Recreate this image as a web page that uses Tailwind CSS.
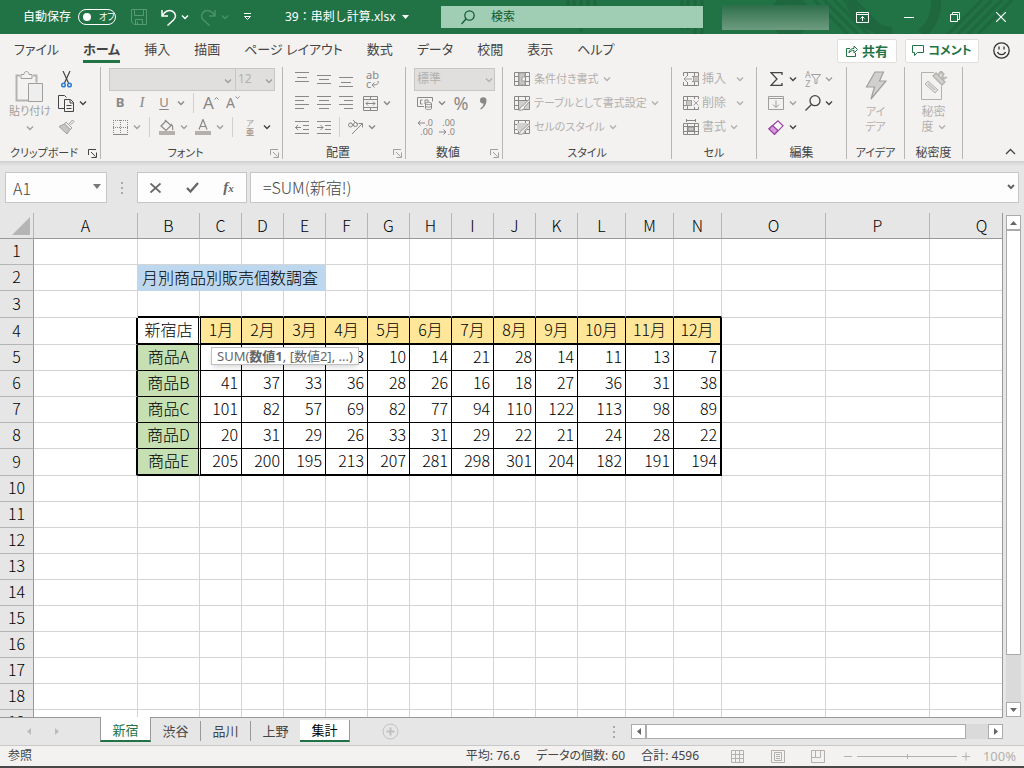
<!DOCTYPE html>
<html lang="ja">
<head>
    <meta charset="UTF-8">
    <meta name="viewport" content="width=device-width, initial-scale=1.0">
    <title>39：串刺し計算.xlsx - Excel</title>
    <script src="https://cdn.jsdelivr.net/npm/@tailwindcss/browser@4"></script>
</head>
<body class="h-screen flex flex-col overflow-hidden bg-[#e6e6e6] font-['Noto_Sans','Noto_Sans_CJK_JP',sans-serif] text-xs text-[#444444] [font-feature-settings:'palt']">

    <!-- Shared icons -->
    <svg class="hidden">
        <symbol id="chev" viewBox="0 0 8 6"><path d="M1 1.5l3 3 3-3" fill="none" stroke="currentColor" stroke-width="1.4"/></symbol>
        <symbol id="launch" viewBox="0 0 9 9"><path d="M.5 6V.5H8M3 3l4.500 4.500M8.500 3.500v5h-5" fill="none" stroke="currentColor"/></symbol>
        <symbol id="sheet" viewBox="0 0 16 16"><path d="M.5 1.500h15v13H.5zM.5 5.500h15M.5 10.500h15M4.500 1.500v13M11.500 1.500v13" fill="none" stroke="currentColor"/></symbol>
    </svg>

    <!-- Title bar -->
    <header class="relative h-[34px] shrink-0 flex items-center bg-[#217346] text-white">
        <svg class="absolute right-0 top-0" width="460" height="34" viewBox="0 0 460 34" fill="none" stroke="#1e673f">
            <path stroke-width="3" d="M4 0v6M10 0v6M17 0v32M24 0v6M31 0v6M118 0v30M124 0v30M131 0v34M138 0v34"/>
            <circle cx="226" cy="16" r="16" stroke-width="9"/>
            <path stroke-width="10" d="M286 0a48 40 0 0 0 42 32M372 0a48 44 0 0 1-14 34"/>
            <path stroke-width="3" d="M250 0l34 34M260 0l34 34M270 0l34 34M280 0l34 34M290 0l34 34M384 34l34-34M394 34l34-34M404 34l34-34M414 34l34-34"/>
        </svg>
        <div class="relative w-[441px] flex items-center">
            <span class="ml-[23px] w-[55px]">自動保存</span>
            <button role="switch" aria-checked="false" aria-label="自動保存" class="w-[38px] h-4 rounded-full border border-white flex items-center pl-1 gap-2 text-[9px]"><span class="w-2 h-2 rounded-full bg-white"></span>オフ</button>
            <button aria-label="上書き保存" class="ml-[15px] text-[#579a76]">
                <svg width="16" height="17" viewBox="0 0 16 17" fill="none" stroke="currentColor"><path d="M.5 .5h15v15H3l-2.500-2.500zM3.500 .5v6h9v-6M4.500 15.500v-5h7v5M6.500 15v-2"/></svg>
            </button>
            <button aria-label="元に戻す" class="ml-3.5">
                <svg width="16" height="17" viewBox="0 0 16 17" fill="none" stroke="currentColor" stroke-width="1.500"><path d="M1 1v6h6M1.500 6.500C4 2 8 .5 11 2c4 2 4.500 6 1.500 9l-6 5.500"/></svg>
            </button>
            <button aria-label="元に戻す一覧" class="ml-1"><svg width="8" height="6"><use href="#chev"/></svg></button>
            <button aria-label="やり直し" class="ml-3 text-[#4a9069]">
                <svg width="16" height="17" viewBox="0 0 16 17" fill="none" stroke="currentColor" stroke-width="1.500"><path d="M14 1v6H8M13.500 6.500C11 2 7 .5 4 2 0 4-.5 8 2.500 11l6 5.500"/></svg>
            </button>
            <button aria-label="やり直し一覧" class="ml-1 text-[#4a9069]"><svg width="8" height="6"><use href="#chev"/></svg></button>
            <button aria-label="クイック アクセス ツール バーのユーザー設定" class="ml-3.5">
                <svg width="9" height="8" viewBox="0 0 9 8" fill="none" stroke="currentColor"><path d="M1 .5h7"/><path d="M1.500 3.500h6l-3 3z"/></svg>
            </button>
            <button class="ml-[33px] flex items-center gap-1.5 whitespace-nowrap [font-feature-settings:normal]">39：串刺し計算.xlsx
                <svg width="7" height="4" viewBox="0 0 7 4"><path d="M0 0h7L3.500 4z" fill="currentColor"/></svg>
            </button>
        </div>
        <label class="relative flex-1 h-[22px] flex items-center bg-[#a0ceb5] text-[#0f5a30]">
            <svg class="ml-5 shrink-0" width="14" height="15" viewBox="0 0 14 15" fill="none" stroke="currentColor" stroke-width="1.200"><circle cx="8.500" cy="5.500" r="4.700"/><path d="M5 9L.5 14"/></svg>
            <input type="text" placeholder="検索" aria-label="検索" class="ml-4 w-full bg-transparent outline-none placeholder:text-[#0f5a30]">
        </label>
        <div class="relative w-[321px] flex items-center">
            <div class="ml-[19px] w-[107px] h-[25px] bg-linear-to-b from-[#2c6f4a] to-[#6d9c80]"></div>
            <button aria-label="リボンの表示オプション" class="ml-[27px]">
                <svg width="13" height="11" viewBox="0 0 13 11" fill="none" stroke="currentColor"><path d="M.5 .5h12v10H.5zM.5 2.500h12M6.500 9V4.500M4.500 6.500l2-2 2 2"/></svg>
            </button>
            <button aria-label="最小化" class="ml-[35px]"><svg width="10" height="11" stroke="currentColor"><path d="M0 5.500h10"/></svg></button>
            <button aria-label="元に戻す (縮小)" class="ml-9">
                <svg width="10" height="10" viewBox="0 0 10 10" fill="none" stroke="currentColor"><path d="M.5 2.500h7v7h-7zM2.500 2.500v-2h7v7h-2"/></svg>
            </button>
            <button aria-label="閉じる" class="ml-9">
                <svg width="10" height="10" viewBox="0 0 10 10" stroke="currentColor" stroke-width="1.200"><path d="M0 0l10 10M10 0L0 10"/></svg>
            </button>
        </div>
    </header>

    <!-- Ribbon tabs -->
    <nav class="h-[33px] shrink-0 flex items-center bg-[#f3f2f1] px-3.5 text-[13px] leading-5 whitespace-nowrap">
        <div class="flex gap-6 pb-1">
            <a href="#">ファイル</a>
            <a href="#" class="relative font-bold after:absolute after:inset-x-0 after:-bottom-1 after:h-[3px] after:bg-[#217346]">ホーム</a>
            <a href="#">挿入</a>
            <a href="#">描画</a>
            <a href="#">ページ レイアウト</a>
            <a href="#">数式</a>
            <a href="#">データ</a>
            <a href="#">校閲</a>
            <a href="#">表示</a>
            <a href="#">ヘルプ</a>
        </div>
        <button class="ml-auto w-[60px] h-6 flex items-center justify-center gap-1 rounded-xs border border-[#e1dfdd] bg-white text-[#217346] font-bold">
            <svg width="12" height="12" viewBox="0 0 12 12" fill="none" stroke="currentColor"><path d="M4 3.500H.5v8h9V8M3 8c0-3 2-4.500 5-4.500V1l3.500 3.500L8 8V5.500C6 5.500 4 6 3 8z"/></svg>共有
        </button>
        <button class="ml-2 w-[74px] h-6 flex items-center justify-center gap-1 rounded-xs border border-[#e1dfdd] bg-white text-[#217346] text-xs font-bold">
            <svg width="12" height="11" viewBox="0 0 12 11" fill="none" stroke="currentColor"><path d="M.5 .5h11v7h-6l-3 3v-3h-2z"/></svg>コメント
        </button>
        <button aria-label="フィードバック" class="ml-3.5">
            <svg width="17" height="17" viewBox="0 0 17 17" fill="none" stroke="#333333" stroke-width="1.300"><circle cx="8.500" cy="8.500" r="7.700"/><path d="M6 4.500v3M11 4.500v3M4.500 10c1.500 3.500 6.500 3.500 8 0"/></svg>
        </button>
    </nav>

    <!-- Ribbon -->
    <section class="h-[94px] shrink-0 flex bg-[#f3f2f1] text-[#a19f9d] whitespace-nowrap pb-0.5">
        <div class="w-[101px] flex flex-col border-r border-[#b8b6b4]">
            <div class="flex pl-2 h-[72px] shrink-0">
                <button class="w-11 flex flex-col items-center pt-1">
                    <svg class="shrink-0" width="30" height="32" viewBox="0 0 30 32" fill="none" stroke="currentColor"><path d="M5 4.500H1.500v25H13M18 4.500h3.500v7" stroke="#b5b3b1" stroke-width="2"/><path d="M6 7.500v-4h3c0-4 5-4 5 0h3v4z" fill="#f3f2f1"/><path d="M13.500 12.500h14v18h-14z" fill="#eeeeee"/></svg>
                    <span class="text-[11px] leading-4">貼り付け</span>
                    <svg class="mt-1.5" width="8" height="6"><use href="#chev"/></svg>
                </button>
                <div class="w-10 flex flex-col text-[#444444] pl-1.5">
                    <button aria-label="切り取り" class="h-6 w-4 grid place-items-center">
                        <svg width="11" height="17" viewBox="0 0 11 17" fill="none"><path d="M2 0l5.500 12M9 0L3.500 12" stroke="#444444" stroke-width="1.200"/><circle cx="2.500" cy="14" r="1.800" stroke="#2b7cd3" stroke-width="1.500"/><circle cx="8.500" cy="14" r="1.800" stroke="#2b7cd3" stroke-width="1.500"/></svg>
                    </button>
                    <div class="flex h-6 items-center">
                        <button aria-label="コピー"><svg width="17" height="17" viewBox="0 0 17 17" fill="none" stroke="currentColor"><path d="M6 13.500H.5V.5h6l2 2"/><path d="M6.500 4.500h6l3 3v9h-9zM12 4.500v3.500h3.500M8.500 10.500h5M8.500 13.500h5"/></svg></button>
                        <button aria-label="コピーのオプション" class="ml-1"><svg width="8" height="6"><use href="#chev"/></svg></button>
                    </div>
                    <button aria-label="書式のコピー" class="h-6 w-4 grid place-items-center">
                        <svg width="17" height="16" viewBox="0 0 17 16" fill="none" stroke="#a19f9d"><path d="M11 5l3.500-4 1.500 1.500L12.500 6M8 3l6 6-2 1.500L6.500 5z" fill="#f3f2f1"/><path d="M6.500 5L1 7.500l8 7.500 3-4.500z" fill="#c8c6c4"/></svg>
                    </button>
                </div>
            </div>
            <div class="flex items-center pr-[3px] text-[#444444]"><span class="flex-1 text-center text-[11px] leading-7">クリップボード</span><button aria-label="クリップボードのオプション"><svg width="9" height="9"><use href="#launch"/></svg></button></div>
        </div>

        <div class="w-[182px] flex flex-col border-r border-[#b8b6b4]">
            <div class="pl-2 h-[72px] shrink-0">
                <div class="flex h-6 items-center">
                    <span class="relative w-[127px] text-[#a19f9d]">
                        <select aria-label="フォント" class="appearance-none w-full h-[23px] border border-[#c8c6c4] bg-[#e1dfdd]"><option></option></select>
                        <svg class="absolute right-1 top-2.5" width="8" height="6"><use href="#chev"/></svg>
                    </span>
                    <span class="relative -ml-px w-10">
                        <select aria-label="フォント サイズ" class="appearance-none w-full h-[23px] border border-[#c8c6c4] bg-[#e1dfdd] pl-0.5 text-[#b3b0ad]"><option>12</option></select>
                        <svg class="absolute right-0.5 top-2.5" width="8" height="6"><use href="#chev"/></svg>
                    </span>
                </div>
                <div class="flex h-6 items-center text-[13px] text-[#8a8886]">
                    <button class="w-[22px] font-bold">B</button>
                    <button class="w-[22px] font-['Liberation_Serif',serif] text-[15px] italic">I</button>
                    <button class="w-[22px] underline underline-offset-2">U</button>
                    <button aria-label="下線のオプション" class="w-3 grid place-items-center"><svg width="8" height="6"><use href="#chev"/></svg></button>
                    <span class="w-px h-5 mx-1.5 bg-[#d2d0ce]"></span>
                    <button aria-label="フォント サイズの拡大" class="w-[22px] flex justify-center text-[17px] leading-5">A<svg width="5" height="8" viewBox="0 0 5 8" fill="none" stroke="currentColor"><path d="M.5 6.500l2-2 2 2"/></svg></button>
                    <button aria-label="フォント サイズの縮小" class="w-[22px] flex justify-center text-sm leading-5">A<svg width="5" height="8" viewBox="0 0 5 8" fill="none" stroke="currentColor"><path d="M.5 3.500l2 2 2-2"/></svg></button>
                </div>
                <div class="flex h-6 items-center">
                    <button aria-label="罫線" class="w-[22px] grid place-items-center"><svg width="15" height="15" viewBox="0 0 15 15" fill="none" stroke="#8a8886"><path d="M.5 0v14M14.500 0v14M0 .5h15M7.500 0v14M0 7.500h15" stroke-dasharray="1 1"/><path d="M0 14.500h15"/></svg></button>
                    <button aria-label="罫線のオプション" class="w-3 grid place-items-center"><svg width="8" height="6"><use href="#chev"/></svg></button>
                    <span class="w-px h-5 mx-1.5 bg-[#d2d0ce]"></span>
                    <button aria-label="塗りつぶしの色" class="w-[22px] grid place-items-center"><svg width="16" height="16" viewBox="0 0 16 16" fill="none" stroke="#8a8886"><path d="M7 2L2 7l5 4.500L12 6.500 6 1M12 5c3 2 1 5 2 6" stroke-width="1.200"/><path d="M0 14h16" stroke="#b3b0ad" stroke-width="4"/></svg></button>
                    <button aria-label="塗りつぶしの色のオプション" class="w-3 grid place-items-center"><svg width="8" height="6"><use href="#chev"/></svg></button>
                    <button aria-label="フォントの色" class="ml-0.5 w-[22px] grid place-items-center"><svg width="16" height="16" viewBox="0 0 16 16" fill="none" stroke="#8a8886"><path d="M4 10.500L8 .5l4 10M5.500 7.500h5" stroke-width="1.200"/><path d="M0 14h16" stroke="#b3b0ad" stroke-width="4"/></svg></button>
                    <button aria-label="フォントの色のオプション" class="w-3 grid place-items-center"><svg width="8" height="6"><use href="#chev"/></svg></button>
                    <span class="w-px h-5 mx-1.5 bg-[#d2d0ce]"></span>
                    <button aria-label="ふりがなの表示" class="w-[22px] flex flex-col items-center text-[8px] leading-[9px]"><span>ア</span><span class="font-bold">亜</span></button>
                    <button aria-label="ふりがなのオプション" class="w-3 grid place-items-center text-[#444444]"><svg width="8" height="6"><use href="#chev"/></svg></button>
                </div>
            </div>
            <div class="flex items-center pr-[3px]"><span class="flex-1 text-center text-[11px] leading-7 text-[#444444]">フォント</span><button aria-label="フォントの設定"><svg width="9" height="9"><use href="#launch"/></svg></button></div>
        </div>

        <div class="w-[123px] flex flex-col border-r border-[#b8b6b4]">
            <div class="pl-2 h-[72px] shrink-0 text-[#8a8886]">
                <div class="flex h-6 items-center">
                    <button aria-label="上揃え" class="w-[22px] grid place-items-center"><svg width="14" height="15" stroke="currentColor"><path d="M0 .5h14M2 5.500h10M0 9.500h14"/></svg></button>
                    <button aria-label="上下中央揃え" class="w-[22px] grid place-items-center"><svg width="14" height="15" stroke="currentColor"><path d="M0 3.500h14M2 7.500h10M0 11.500h14"/></svg></button>
                    <button aria-label="下揃え" class="w-[22px] grid place-items-center"><svg width="14" height="15" stroke="currentColor"><path d="M0 5.500h14M2 10.500h10M0 14.500h14"/></svg></button>
                    <button aria-label="折り返して全体を表示する" class="ml-1 w-[22px] flex flex-col items-center text-[11px] leading-[9px]">
                        <span class="w-3">ab</span>
                        <span class="w-3 flex">c<svg class="mt-0.5 shrink-0" width="8" height="7" viewBox="0 0 8 7" fill="none" stroke="currentColor"><path d="M7 0c1 3-1 4-6 4M3.500 1.500L1 4l2.500 2.500"/></svg></span>
                    </button>
                </div>
                <div class="flex h-6 items-center">
                    <button aria-label="左揃え" class="w-[22px] grid place-items-center"><svg width="14" height="14" stroke="currentColor"><path d="M0 .5h14M0 4.500h9M0 8.500h14M0 12.500h9"/></svg></button>
                    <button aria-label="中央揃え" class="w-[22px] grid place-items-center"><svg width="14" height="14" stroke="currentColor"><path d="M0 .5h14M2 4.500h10M0 8.500h14M2 12.500h10"/></svg></button>
                    <button aria-label="右揃え" class="w-[22px] grid place-items-center"><svg width="14" height="14" stroke="currentColor"><path d="M0 .5h14M5 4.500h9M0 8.500h14M5 12.500h9"/></svg></button>
                    <button aria-label="セルを結合して中央揃え" class="ml-0.5 w-[22px] grid place-items-center"><svg width="15" height="15" viewBox="0 0 15 15" fill="none" stroke="currentColor"><path d="M.5 .5h14v14H.5zM.5 3.500h14M.5 11.500h14M7.500 .5v3M7.500 11.500v3M3 7.500h9M5 5.500l-2 2 2 2M10 5.500l2 2-2 2"/></svg></button>
                    <button aria-label="結合のオプション" class="w-3 grid place-items-center"><svg width="8" height="6"><use href="#chev"/></svg></button>
                </div>
                <div class="flex h-6 items-center">
                    <button aria-label="インデントを減らす" class="w-[22px] grid place-items-center"><svg width="14" height="13" fill="none" stroke="currentColor"><path d="M0 .5h14M8 4.500h6M8 8.500h6M0 12.500h14M6 6.500H.5M3 4L.5 6.500 3 9"/></svg></button>
                    <button aria-label="インデントを増やす" class="w-[22px] grid place-items-center"><svg width="14" height="13" fill="none" stroke="currentColor"><path d="M0 .5h14M8 4.500h6M8 8.500h6M0 12.500h14M0 6.500h6M3.500 4L6 6.500 3.500 9"/></svg></button>
                    <span class="w-px h-5 mx-1 bg-[#d2d0ce]"></span>
                    <button aria-label="方向" class="w-[22px] grid place-items-center"><svg width="17" height="16" viewBox="0 0 17 16" fill="none" stroke="currentColor"><circle cx="3.500" cy="6" r="2"/><path d="M3.500 3.500l4 4M6 1l5 5"/><circle cx="8.500" cy="5.500" r="2"/><path d="M5 15L15.500 4.500M11.500 4.500h4v4"/></svg></button>
                    <button aria-label="方向のオプション" class="w-3 grid place-items-center"><svg width="8" height="6"><use href="#chev"/></svg></button>
                </div>
            </div>
            <div class="flex items-center pr-[3px]"><span class="flex-1 text-center leading-7 text-[#444444]">配置</span><button aria-label="配置の設定"><svg width="9" height="9"><use href="#launch"/></svg></button></div>
        </div>

        <div class="w-[97px] flex flex-col border-r border-[#b8b6b4]">
            <div class="pl-2 h-[72px] shrink-0 text-[#8a8886]">
                <div class="relative w-[81px] flex h-6 items-center text-[#b3b0ad]">
                    <select aria-label="表示形式" class="appearance-none w-full h-[23px] border border-[#c8c6c4] bg-[#e1dfdd] pl-0.5"><option>標準</option></select>
                    <svg class="absolute right-0.5 top-2.5" width="8" height="6"><use href="#chev"/></svg>
                </div>
                <div class="flex h-6 items-center">
                    <button aria-label="通貨表示形式" class="w-[22px] grid place-items-center"><svg width="17" height="13" viewBox="0 0 17 13" fill="none" stroke="currentColor"><path d="M7 9.500H.5v-9h15v4M5.500 3h-2v4h2M8 7V3h3v2"/><path d="M8.500 6.500v5c0 1.500 6 1.500 6 0v-5c0-1.500-6-1.500-6 0c0 1.500 6 1.500 6 0M8.500 9c0 1.500 6 1.500 6 0" fill="#f3f2f1"/></svg></button>
                    <button aria-label="通貨のオプション" class="w-3 grid place-items-center"><svg width="8" height="6"><use href="#chev"/></svg></button>
                    <button class="ml-0.5 w-[22px] text-lg leading-6">%</button>
                    <button aria-label="桁区切りスタイル" class="w-[22px] grid place-items-center"><svg width="8" height="13" viewBox="0 0 8 13"><path d="M1 3.500a3.200 3.200 0 0 1 6.500 0c0 4-2.500 7-5.500 9l-.8-1C3.500 10 4.500 8.500 4.500 6.500 2.500 7 1 5.500 1 3.500z" fill="#8a8886"/></svg></button>
                </div>
                <div class="flex h-6 items-center">
                    <button aria-label="小数点以下の表示桁数を増やす" class="w-[22px] flex flex-col items-center text-[9px] leading-[9px]">
                        <span class="w-4 flex justify-end items-center"><svg width="8" height="6" fill="none" stroke="currentColor"><path d="M8 3H1M3.500 .5L1 3l2.500 2.500"/></svg>.0</span>
                        <span class="w-4 text-right">.00</span>
                    </button>
                    <button aria-label="小数点以下の表示桁数を減らす" class="w-[22px] flex flex-col items-center text-[9px] leading-[9px]">
                        <span class="w-4 text-right">.00</span>
                        <span class="w-4 flex justify-end items-center"><svg width="8" height="6" fill="none" stroke="currentColor"><path d="M0 3h7M4.500 .5L7 3 4.500 5.500"/></svg>.0</span>
                    </button>
                </div>
            </div>
            <div class="flex items-center pr-[3px]"><span class="flex-1 text-center leading-7 text-[#444444]">数値</span><button aria-label="数値の設定"><svg width="9" height="9"><use href="#launch"/></svg></button></div>
        </div>

        <div class="w-[169px] flex flex-col border-r border-[#b8b6b4]">
            <div class="pl-[11px] h-[72px] shrink-0 text-[11px] text-[#b3b0ad]">
                <button class="flex h-6 items-center gap-1"><svg class="text-[#8a8886]" width="16" height="16"><use href="#sheet"/><path d="M5 2h6v4H8v4h3v4H5z" fill="#c8c6c4" stroke="#a19f9d"/></svg>条件付き書式<svg width="8" height="6"><use href="#chev"/></svg></button>
                <button class="flex h-6 items-center gap-1"><svg class="text-[#8a8886]" width="16" height="16"><use href="#sheet"/><path d="M5 6h10v8H5z" fill="#d2d0ce"/><path d="M15.500 4l-7 7c-2 0-2 3-4 4 4 1 6-1 6-3l5.500-6z" fill="#f3f2f1" stroke="#979593"/></svg>テーブルとして書式設定<svg width="8" height="6"><use href="#chev"/></svg></button>
                <button class="flex h-6 items-center gap-1"><svg class="text-[#8a8886]" width="16" height="16"><use href="#sheet"/><path d="M3 4h10v8H3z" fill="#d2d0ce"/><path d="M15.500 4l-7 7c-2 0-2 3-4 4 4 1 6-1 6-3l5.500-6z" fill="#f3f2f1" stroke="#979593"/></svg>セルのスタイル<svg width="8" height="6"><use href="#chev"/></svg></button>
            </div>
            <span class="text-center text-[11px] leading-7 text-[#444444]">スタイル</span>
        </div>

        <div class="w-[85px] flex flex-col border-r border-[#b8b6b4]">
            <div class="pl-[11px] h-[72px] shrink-0 text-[#b3b0ad]">
                <button class="flex h-6 items-center"><svg class="text-[#8a8886]" width="16" height="16"><use href="#sheet"/><path d="M0 5h9v6H0z" fill="#f3f2f1"/><path d="M10.500 5.500h5v5h-5z" fill="#c8c6c4" stroke="#a19f9d"/><path d="M9 8H1M4 5L1 8l3 3" fill="none" stroke="#a19f9d"/></svg><span class="ml-[3px] mr-2.5">挿入</span><svg width="8" height="6"><use href="#chev"/></svg></button>
                <button class="flex h-6 items-center"><svg class="text-[#8a8886]" width="16" height="16"><use href="#sheet"/><path d="M9 4h7v8H9z" fill="#f3f2f1"/><path d="M3.500 5.500h5v5h-5z" fill="#c8c6c4" stroke="#a19f9d"/><path d="M10.500 5.500l5 5M15.500 5.500l-5 5" fill="none" stroke="#a19f9d"/></svg><span class="ml-[3px] mr-2.5">削除</span><svg width="8" height="6"><use href="#chev"/></svg></button>
                <button class="flex h-6 items-center"><svg class="text-[#8a8886]" width="16" height="16" viewBox="0 0 16 16" fill="none" stroke="currentColor"><path d="M3.500 0v3M12.500 0v3M3.500 1.500h9M.5 4.500h15v11H.5zM.5 7.500h15M.5 12.500h15M4.500 4.500v11M11.500 4.500v11"/><path d="M5 8h6v4H5z" fill="#c8c6c4"/></svg><span class="ml-[3px] mr-1">書式</span><svg width="8" height="6"><use href="#chev"/></svg></button>
            </div>
            <span class="text-center text-[11px] leading-7 text-[#444444]">セル</span>
        </div>

        <div class="w-[90px] flex flex-col border-r border-[#b8b6b4]">
            <div class="pl-2 h-[72px] shrink-0 text-[#444444]">
                <div class="flex h-6 items-center">
                    <button aria-label="合計" class="w-[22px] grid place-items-center"><svg width="13" height="14" viewBox="0 0 13 14" fill="none" stroke="currentColor" stroke-width="1.300"><path d="M12 3V.700H1L7 7l-6 6.300h11V11"/></svg></button>
                    <button aria-label="合計のオプション" class="w-3 grid place-items-center"><svg width="8" height="6"><use href="#chev"/></svg></button>
                    <button aria-label="並べ替えとフィルター" class="ml-1.5 w-[18px] flex items-center text-[#a19f9d] text-[9px] leading-[9px]"><span>A<br>Z</span><svg class="shrink-0" width="10" height="10" viewBox="0 0 10 10" fill="none" stroke="currentColor"><path d="M.5 .5h9L6 5v4.500H4V5z"/></svg></button>
                    <button aria-label="フィルターのオプション" class="w-3 grid place-items-center text-[#a19f9d]"><svg width="8" height="6"><use href="#chev"/></svg></button>
                </div>
                <div class="flex h-6 items-center">
                    <button aria-label="フィル" class="w-[22px] grid place-items-center text-[#a19f9d]"><svg width="16" height="14" viewBox="0 0 16 14" fill="none" stroke="currentColor"><path d="M.5 .5h15v13H.5zM.5 2.500h15M8 4.500v7M5 8.500l3 3 3-3"/></svg></button>
                    <button aria-label="フィルのオプション" class="w-3 grid place-items-center text-[#a19f9d]"><svg width="8" height="6"><use href="#chev"/></svg></button>
                    <button aria-label="検索と選択" class="ml-1.5 w-[18px]"><svg width="16" height="16" viewBox="0 0 16 16" fill="none" stroke="currentColor" stroke-width="1.300"><circle cx="10" cy="5.700" r="5"/><path d="M6.500 9.500L.5 15.500"/></svg></button>
                    <button aria-label="検索のオプション" class="w-3 grid place-items-center"><svg width="8" height="6"><use href="#chev"/></svg></button>
                </div>
                <div class="flex h-6 items-center">
                    <button aria-label="クリア" class="w-[22px] grid place-items-center"><svg width="16" height="15" viewBox="0 0 16 15" stroke="#9b3fa5" stroke-width="1.200"><path d="M10 .8l5 5-8.500 8.500-5.500-5.500z" fill="#f8f8f8"/><path d="M4.500 5.500l5.500 5-3.500 3.800-5.500-5.500z" fill="#d59bdb"/></svg></button>
                    <button aria-label="クリアのオプション" class="w-3 grid place-items-center"><svg width="8" height="6"><use href="#chev"/></svg></button>
                </div>
            </div>
            <span class="text-center leading-7 text-[#444444]">編集</span>
        </div>

        <div class="w-[58px] flex flex-col border-r border-[#b8b6b4]">
            <button class="h-[72px] shrink-0 flex flex-col items-center pt-1 text-[11px] leading-[15px] text-[#b3b0ad]">
                <svg class="mb-1 shrink-0" width="22" height="29" viewBox="0 0 22 29"><path d="M10 1h8.500l-4 9H21L6 28l3.500-12H1.500z" fill="#d2d0ce" stroke="#a19f9d" stroke-width="1.200"/></svg>
                アイ<br>デア
            </button>
            <span class="text-center text-[11px] leading-7 text-[#444444]">アイデア</span>
        </div>

        <div class="w-[58px] flex flex-col border-r border-[#b8b6b4]">
            <button class="h-[72px] shrink-0 flex flex-col items-center pt-1 leading-[15px] text-[#b3b0ad]">
                <svg class="mb-1 shrink-0" width="28" height="29" viewBox="0 0 28 29" fill="none" stroke="#b3b0ad"><path d="M14 1.500H1.500v27h20V15"/><path d="M5 13l3-3 10 9-3 3zM8 13l7 6" fill="#e1dfdd"/><path d="M13 5l3-3 9 9-3 3zM18 4l3-4 3 3-2 3 2 2 3-2" fill="#d2d0ce" stroke-width="1.300"/></svg>
                <span>秘密</span>
                <span class="flex items-center gap-1">度<svg width="8" height="6"><use href="#chev"/></svg></span>
            </button>
            <span class="text-center leading-7 text-[#444444]">秘密度</span>
        </div>
        <button aria-label="リボンを折りたたむ" class="ml-auto mr-2 mt-auto mb-1 text-[#444444]"><svg width="11" height="7" viewBox="0 0 11 7" fill="none" stroke="currentColor" stroke-width="1.300"><path d="M1 6l4.500-4.500L10 6"/></svg></button>
    </section>
    <div class="h-[5px] shrink-0 bg-linear-to-b from-[#d0d0d0] to-[#e6e6e6]"></div>

    <!-- Formula bar -->
    <div class="h-[47px] shrink-0 flex items-start pt-1.5 pl-[5px] pr-[5px] font-['Noto_Sans_CJK_JP',sans-serif] text-base font-light">
        <div class="relative w-[102px]">
            <input type="text" value="A1" aria-label="名前ボックス" class="w-full h-[31px] pl-[7px] border border-[#c6c6c6] bg-[#fdfdfd] outline-none">
            <svg class="absolute right-1.5 top-3" width="8" height="5"><path d="M0 0h8L4 5z" fill="#777777"/></svg>
        </div>
        <svg class="mx-3.5 mt-2.5" width="2" height="12" fill="#aaaaaa"><path d="M0 0h2v2H0zM0 5h2v2H0zM0 10h2v2H0z"/></svg>
        <div class="w-[110px] h-[31px] flex items-center justify-around border border-[#c6c6c6] bg-[#fdfdfd] text-[#666666]">
            <button aria-label="キャンセル"><svg width="11" height="10" viewBox="0 0 11 10" stroke="currentColor" stroke-width="1.800"><path d="M.5 .5l10 9M10.500 .5l-10 9"/></svg></button>
            <button aria-label="入力"><svg width="13" height="11" viewBox="0 0 13 11" fill="none" stroke="currentColor" stroke-width="2.300"><path d="M1 6l3.500 3.500L12 1"/></svg></button>
            <button aria-label="関数の挿入" class="font-['Liberation_Serif',serif] text-[15px] italic font-bold leading-5">f<span class="text-[11px]">x</span></button>
        </div>
        <div class="relative flex-1 ml-[3px]">
            <input type="text" value="=SUM(新宿!)" aria-label="数式バー" class="w-full h-[31px] pl-3 pb-0.5 border border-[#c6c6c6] bg-[#fdfdfd] outline-none [font-feature-settings:normal]">
            <svg class="absolute right-1 top-3 text-[#666666]" width="8" height="6" viewBox="0 0 8 6"><path d="M1 1l3 3 3-3" fill="none" stroke="currentColor" stroke-width="2"/></svg>
        </div>
    </div>

    <!-- Sheet -->
    <main class="flex-1 min-h-0 flex">
        <div class="flex-1 min-w-0 overflow-hidden border-r border-[#999999] bg-white">
            <table class="table-fixed w-px border-separate border-spacing-0 bg-white font-['Noto_Sans_CJK_JP',sans-serif] font-light text-base leading-[22px] text-black whitespace-nowrap [font-feature-settings:normal]">
                <colgroup id="cols"></colgroup>
                <thead><tr id="head" class="h-[26px]"></tr></thead>
                <tbody id="rows"></tbody>
            </table>
        </div>
        <div class="w-[21px] flex flex-col pl-[3px] pr-[3px] pt-0.5">
            <button aria-label="上へ" class="h-[15px] grid place-items-center border border-[#ababab] bg-white"><svg width="7" height="4"><path d="M0 4h7L3.500 0z" fill="#666666"/></svg></button>
            <div class="flex-1 bg-[#dadada]"><div class="h-[90%] border border-[#ababab] bg-white"></div></div>
            <button aria-label="下へ" class="h-[15px] grid place-items-center border border-[#ababab] bg-white"><svg width="7" height="4"><path d="M0 0h7L3.500 4z" fill="#666666"/></svg></button>
        </div>
    </main>

    <!-- Sheet tabs -->
    <div class="h-7 shrink-0 flex pr-[21px] text-[13px]">
        <div class="w-[100px] flex items-center gap-6 pl-[27px] border-t border-[#999999]">
            <button aria-label="前のシート"><svg width="4" height="7"><path d="M4 0v7L0 3.500z" fill="#bbbbbb"/></svg></button>
            <button aria-label="次のシート"><svg width="4" height="7"><path d="M0 0v7l4-3.500z" fill="#bbbbbb"/></svg></button>
        </div>
        <button class="w-[51px] h-[25px] pt-0.5 border-x border-x-[#999999] border-b-2 border-b-[#217346] bg-white text-[#217346] leading-5">新宿</button>
        <div class="flex-1 flex border-t border-[#999999] leading-5">
            <button class="w-[50px] h-5 mt-[3px] border-r border-[#999999]">渋谷</button>
            <button class="w-[50px] h-5 mt-[3px] border-r border-[#999999]">品川</button>
            <button class="w-[49px] h-5 mt-[3px]">上野</button>
            <button class="w-[50px] h-[22px] mt-0.5 border-r border-r-[#999999] border-b-2 border-b-[#217346] bg-white text-black">集計</button>
            <button aria-label="新しいシート" class="ml-8 self-center"><svg width="17" height="17" viewBox="0 0 17 17" fill="none" stroke="#c0c0c0"><circle cx="8.500" cy="8.500" r="7.500"/><path d="M4.500 8.500h8M8.500 4.500v8" stroke-width="2"/></svg></button>
            <svg class="ml-auto mr-4 mt-2" width="2" height="12" fill="#aaaaaa"><path d="M0 0h2v2H0zM0 5h2v2H0zM0 10h2v2H0z"/></svg>
            <div class="w-[372px] h-[15px] mt-1.5 flex bg-[#dadada]">
                <button aria-label="左へ" class="w-[15px] grid place-items-center border border-[#ababab] bg-white"><svg width="4" height="7"><path d="M4 0v7L0 3.500z" fill="#666666"/></svg></button>
                <div class="w-80 border border-[#ababab] bg-white"></div>
                <button aria-label="右へ" class="ml-auto w-[15px] grid place-items-center border border-[#ababab] bg-white"><svg width="4" height="7"><path d="M0 0v7l4-3.500z" fill="#666666"/></svg></button>
            </div>
        </div>
    </div>

    <!-- Status bar -->
    <footer class="h-[23px] shrink-0 flex items-center border-t border-t-[#c8c8c8] border-b-2 border-b-[#4a4748] bg-[#f3f2f1] pl-2 pr-2 whitespace-nowrap">
        <span>参照</span>
        <div class="ml-auto mr-8 flex gap-4">
            <span>平均: 76.6</span>
            <span>データの個数: 60</span>
            <span>合計: 4596</span>
        </div>
        <div class="flex items-center text-[#b3b0ad]">
            <button aria-label="標準" class="mr-[27px]"><svg width="13" height="13" fill="none" stroke="currentColor"><path d="M.5 .5h12v12H.5zM.5 4.500h12M.5 8.500h12M4.500 .5v12M8.500 .5v12"/></svg></button>
            <button aria-label="ページ レイアウト" class="mr-[26px]"><svg width="14" height="13" fill="none" stroke="currentColor"><path d="M.5 .5h13v12H.5zM3.500 2.500h7v8h-7zM5 4.500h4M5 6.500h4M5 8.500h4"/></svg></button>
            <button aria-label="改ページ プレビュー" class="mr-[19px]"><svg width="14" height="13" fill="none" stroke="currentColor"><path d="M.5 .5h13v12H.5zM4.500 .5v7h5v-7M4.500 7.500H.5"/></svg></button>
            <button aria-label="縮小"><svg width="8" height="9" stroke="currentColor"><path d="M0 4.500h8"/></svg></button>
            <input type="range" value="50" aria-label="ズーム" class="mx-[5px] w-[100px] h-px appearance-none bg-[#b3b0ad] [&::-webkit-slider-thumb]:appearance-none [&::-webkit-slider-thumb]:w-px [&::-webkit-slider-thumb]:h-[5px] [&::-webkit-slider-thumb]:bg-[#b3b0ad]">
            <button aria-label="拡大"><svg width="8" height="9" stroke="currentColor"><path d="M0 4.500h8M4 .5v8"/></svg></button>
            <button class="ml-3 w-[34px] text-right text-[13px] leading-4">100%</button>
        </div>
    </footer>

    <script>
        const letters = "ABCDEFGHIJKLMNOPQ".split("");
        const narrow = { B: 62, C: 42, D: 42, E: 42, F: 42, G: 42, H: 42, I: 42, J: 42, K: 42, L: 48, M: 48, N: 48 };
        const tallRows = [3, 4, 9];
        const sales = {
            4: ["新宿店", "1月", "2月", "3月", "4月", "5月", "6月", "7月", "8月", "9月", "10月", "11月", "12月"],
            5: ["商品A", "", "", "", 13, 10, 14, 21, 28, 14, 11, 13, 7],
            6: ["商品B", 41, 37, 33, 36, 28, 26, 16, 18, 27, 36, 31, 38],
            7: ["商品C", 101, 82, 57, 69, 82, 77, 94, 110, 122, 113, 98, 89],
            8: ["商品D", 20, 31, 29, 26, 33, 31, 29, 22, 21, 24, 28, 22],
            9: ["商品E", 205, 200, 195, 213, 207, 281, 298, 301, 204, 182, 191, 194]
        };
        const hint = `<div class="absolute z-10 left-2.5 top-0.5 h-[18px] px-[5px] border border-[#c0c0c0] bg-white font-['Noto_Sans','Noto_Sans_CJK_JP',sans-serif] font-normal text-[13px] leading-4 text-[#666666] shadow-md">SUM(<b>数値1</b>, [数値2], ...)</div>`;

        document.getElementById("cols").innerHTML =
            `<col style="width:34px">` + letters.map(l => `<col style="width:${narrow[l] || 104}px">`).join("");

        document.getElementById("head").innerHTML =
            `<th aria-label="すべて選択" class="p-0 bg-[#e6e6e6] border-r border-b border-b-[#999999] border-r-[#b5b5b5]"><svg class="ml-3" width="18" height="18"><path d="M18 0v18H0z" fill="#b5b5b5"/></svg></th>` +
            letters.map(l => `<th class="p-0 pb-0.5 font-light bg-[#e6e6e6] border-r border-b border-b-[#999999] border-r-[#b5b5b5]">${l}</th>`).join("");

        // Cell of the bordered sales table (B4:N9)
        function salesCell(r, c) {
            const value = sales[r][c];
            let cls = "p-0 pb-[3px] border-black";
            cls += r === 4 || r === 9 ? " border-b-2" : " border-b";
            if (c === 0) {
                cls += " text-center border-r border-r-white shadow-[inset_-1px_0_0_#000]";
                cls += r === 4 ? " bg-white" : " bg-[#c6e0b4]";
            } else {
                cls += c === 12 ? " border-r-2" : " border-r";
                if (c === 1) cls += " relative border-l";
                cls += r === 4 ? " text-center bg-[#ffe699]" : " text-right pr-[3px]";
            }
            return `<td class="${cls}">${value}${r === 5 && c === 1 ? hint : ""}</td>`;
        }

        let html = "";
        for (let r = 1; r <= 19; r++) {
            html += `<tr class="${tallRows.includes(r) ? "h-[27px]" : "h-[26px]"}">`;
            html += `<th class="p-0 pb-[3px] font-light bg-[#e6e6e6] border-r border-b border-b-[#b5b5b5] border-r-[#999999]">${r}</th>`;
            for (let i = 0; i < letters.length; i++) {
                if (sales[r] && i >= 1 && i <= 13) {
                    html += salesCell(r, i - 1);
                } else if (r === 2 && i === 1) {
                    html += `<td colspan="4" class="p-0 pb-0.5 pl-1 bg-[#bdd7ee]">月別商品別販売個数調査</td>`;
                    i += 3;
                } else if (sales[r] && i === 0) {
                    html += `<td class="p-0 border-b border-b-[#d4d4d4] border-r-2 border-r-black"></td>`;
                } else if (r === 3 && i >= 1 && i <= 13) {
                    html += `<td class="p-0 border-b-2 border-b-black border-r border-r-[#d4d4d4]"></td>`;
                } else {
                    html += `<td class="p-0 border-b border-r border-[#d4d4d4]"></td>`;
                }
            }
            html += "</tr>";
        }
        document.getElementById("rows").innerHTML = html;
    </script>

</body>
</html>
